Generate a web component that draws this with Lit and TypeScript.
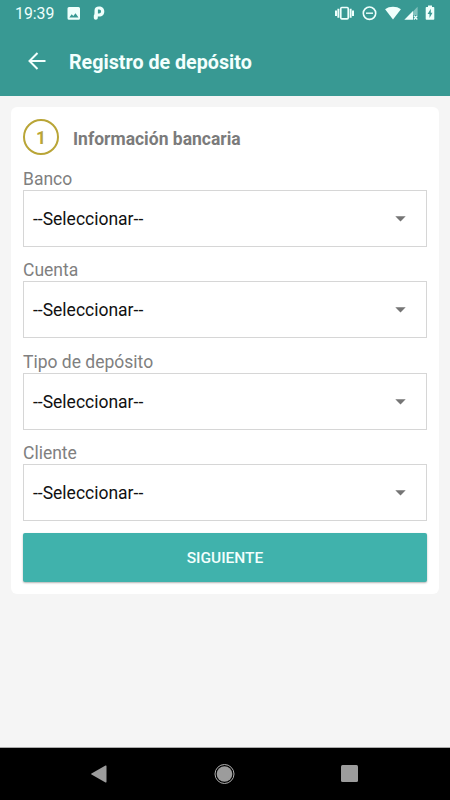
import { LitElement, html, css } from "lit";
import { customElement, property } from "lit/decorators.js";

@customElement("status-bar")
class StatusBar extends LitElement {
  static styles = css`
    :host { display: flex; height: 28px; padding: 0 15px 0 15px; color: #effffc; }
    .time { font-size: 15.800px; line-height: 28px; width: 52px; }
    svg { display: block; height: 28px; fill: currentColor; flex: none; }
    .space { flex: 1; }
    .app { margin-left: 12px; }
    .line { fill: none; stroke: currentColor; stroke-width: 1.6; }
    .faint { opacity: 0.4; }
    .cut { fill: #389993; }
    .dnd { margin-left: 8px; }
    .wifi { margin-left: 8px; }
    .cell { margin-left: 3px; }
    .battery { margin-left: 7px; }
  `;
  render() {
    return html`
      <span class="time">19:39</span>
      <svg width="14" viewBox="0 0 14 28"><path fill-rule="evenodd" d="M2 7h9.500q1.500 0 1.500 1.500v9.800q0 1.500-1.500 1.500H2Q.5 19.800.5 18.300V8.500Q.5 7 2 7zM2.300 17.500h9.200l-3-4.200-2.200 2.800-1.600-1.900z"/></svg>
      <svg class="app" width="12" viewBox="0 0 12 28"><path fill-rule="evenodd" d="M1.500 10.500C1.500 8 3.200 6.500 6 6.500c3.100 0 5.300 2 5.300 4.900 0 3-2 5-5 5H4.800v1.400c0 1.300-.8 2-2 2s-2-.7-2-2v-2.300c.4-.8.700-1.600.7-2.600zM4.900 9.600v3.800H6c1.300 0 2-.7 2-1.900S7.300 9.600 6 9.600z"/></svg>
      <span class="space"></span>
      <svg width="19" viewBox="0 0 19 28"><rect class="line" x="5.800" y="7.500" width="7.400" height="11.400" rx="1"/><path d="M0 10.500h2v5.400H0zM2.400 8.700h2v9h-2zM14.600 8.700h2v9h-2zM17 10.500h2v5.400h-2z"/></svg>
      <svg class="dnd" width="15" viewBox="0 0 15 28"><circle class="line" cx="7.500" cy="13.200" r="6.200"/><path d="M4 12.500h7v1.400H4z"/></svg>
      <svg class="wifi" width="16" viewBox="0 0 16 28"><path d="M8 19.600.1 9.300C4.200 6 11.800 6 15.900 9.300z"/></svg>
      <svg class="cell" width="14" viewBox="0 0 14 28"><path class="faint" d="M8 12.500 13.600 6.800V15H8z"/><path d="M.3 19.800 9 11v8.800z"/><path d="m9.900 15.600 3.400 3.900m0-3.900-3.400 3.900" stroke="currentColor" stroke-width="1.300"/></svg>
      <svg class="battery" width="10" viewBox="0 0 10 28"><path d="M3 5.500h4V7h1.500q.8 0 .8.800V19q0 .8-.8.800h-7q-.8 0-.8-.8V7.800Q.7 7 1.500 7H3z"/><path class="cut" d="M5.800 8.700 2.600 14h1.900v4l3-5.300H5.800z"/></svg>
    `;
  }
}

@customElement("select-field")
class SelectField extends LitElement {
  @property() label = "";
  static styles = css`
    :host { display: block; height: 91.400px; }
    .label { height: 21px; line-height: 21px; font-size: 17.500px; color: #808080; }
    .box { box-sizing: border-box; height: 57px; border: 1px solid #d6d6d6; padding: 1px 20.500px 0 9px; display: flex; align-items: center; justify-content: space-between; font-size: 17.500px; color: #111; }
    svg { display: block; fill: #757575; }
  `;
  render() {
    return html`<div class="label">${this.label}</div>
      <div class="box"><span>--Seleccionar--</span><svg width="11" height="6" viewBox="0 0 11 6"><path d="M.3.300h10.400L5.500 5.600z"/></svg></div>`;
  }
}

@customElement("app-root")
class AppRoot extends LitElement {
  static styles = css`
    :host { display: flex; flex-direction: column; height: 800px; background: #f5f5f5; font-family: Roboto, "Liberation Sans", sans-serif; overflow: hidden; }
    .header { background: #389993; height: 96px; }
    .toolbar { display: flex; align-items: center; height: 68px; padding-left: 27px; color: #f3fffd; }
    .toolbar svg { display: block; margin-right: 23px; margin-top: -2px; }
    .title { font-size: 19.700px; font-weight: 700; }
    .content { flex: 1; padding: 11px 11px 0; }
    .card { box-sizing: border-box; height: 487px; background: #fff; border-radius: 6px; padding: 12px 12px 0; }
    .step { display: flex; align-items: center; height: 36px; margin-bottom: 14px; }
    .number { box-sizing: border-box; width: 36px; height: 36px; border: 2px solid #b9a537; border-radius: 50%; color: #b9a537; font-size: 17.500px; font-weight: 700; line-height: 34px; text-align: center; margin-right: 14px; }
    .heading { font-size: 17.500px; font-weight: 700; color: #7b7b7b; padding-top: 3px; }
    .next { display: block; width: 100%; height: 49px; border: 0; border-radius: 2px; background: #40b2ac; color: #f3fffd; font: 500 15.500px Roboto, sans-serif; margin-top: -2px; padding: 2px 0 0; box-shadow: 0 1px 2px rgba(0, 0, 0, 0.3); }
    .nav { display: flex; justify-content: space-between; align-items: center; background: #000; padding: 0 92px 1px 91px; border-top: 1px solid #aaa; box-sizing: border-box; height: 53px; }
    .nav svg { display: block; fill: #9c9c9c; }
    .ring { fill: none; stroke: #b0b0b0; stroke-width: 1; }
  `;
  render() {
    return html`
      <div class="header">
        <status-bar></status-bar>
        <div class="toolbar">
          <svg width="19" height="18" viewBox="0 0 19 18" fill="none" stroke="currentColor" stroke-width="2"><path d="M18.500 9H2.500M10.500 1 2.500 9l8 8"/></svg>
          <span class="title">Registro de depósito</span>
        </div>
      </div>
      <div class="content">
        <div class="card">
          <div class="step"><span class="number">1</span><span class="heading">Información bancaria</span></div>
          ${["Banco", "Cuenta", "Tipo de depósito", "Cliente"].map((l) => html`<select-field label=${l}></select-field>`)}
          <button class="next">SIGUIENTE</button>
        </div>
      </div>
      <div class="nav">
        <svg width="16" height="18" viewBox="0 0 16 18"><path d="M15.500 1.200v15.600Q15.500 18 14.500 17.400L.5 9.600Q-.3 9 .5 8.400L14.500.600Q15.500 0 15.500 1.200z"/></svg>
        <svg width="22" height="20" viewBox="-1.500 0 22 20"><circle cx="10" cy="10" r="7.800"/><circle class="ring" cx="10" cy="10" r="9.500"/></svg>
        <svg width="17" height="17" viewBox="0 0 17 17"><rect width="17" height="17" rx="1.500"/></svg>
      </div>
    `;
  }
}
